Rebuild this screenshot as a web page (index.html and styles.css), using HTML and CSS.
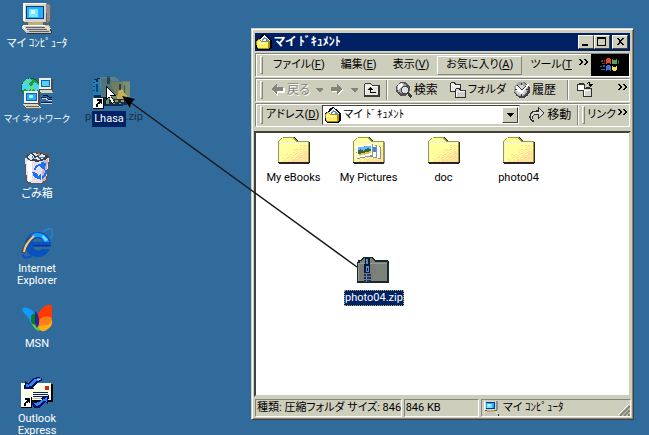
FILE: index.html
```html
<!DOCTYPE html>
<html lang="ja">
<head>
<meta charset="utf-8">
<title>マイ ﾄﾞｷｭﾒﾝﾄ</title>
<link rel="stylesheet" href="styles.css">
</head>
<body>
<svg class="defs" aria-hidden="true">
  <defs>
    <pattern id="dots" width="4" height="4" patternUnits="userSpaceOnUse">
      <path fill="#ffce9c" d="M0 0h1v1H0zM2 1h1v1H2zM1 2h1v1H1zM3 3h1v1H3zM3 1h1v1H3z"/>
    </pattern>
    <symbol id="folder" viewBox="0 0 32 28">
      <path fill="#000" d="M2 3h2V2h2V1h11v1h1v1h1v1h1v1h11v1h1v21h-1v1H1v-1H0V5h1V4h1z" opacity=".85"/>
      <path fill="#9c9c31" d="M0 5h1V4h1V3h1V2h2V1h11v1h1v1h1v1h1v1h12v21H0z"/>
      <path fill="#ffff9c" d="M1 5h1V4h1V3h1V2h11v1h1v1h1v1h1v1h12v20H1z"/>
      <path fill="#efefef" d="M1 6h29v1H2v18H1z"/>
      <path fill="url(#dots)" d="M22 9h8v17H4v-4h4v-4h7v-5h7z"/>
      <path fill="#ffce9c" opacity=".45" d="M25 15h5v11H13v-3h7v-4h5z"/>
    </symbol>
    <symbol id="pc" viewBox="0 0 32 32">
      <path fill="#63635a" d="M2 1h27l1 2v16l-2 3H4l-2-2z"/>
      <path fill="#d6d6c6" d="M2 1h23v19H3z"/>
      <path fill="#fff" d="M2 1h24v1H4v17H2z"/>
      <path fill="#8c8c94" d="M25 1l4 2v16l-3 2z"/>
      <path fill="#003984" d="M5 4h18v13H5z"/>
      <path fill="#29adff" d="M6 5h16v11H6z"/>
      <path fill="#7be7ff" d="M8 7h9v8H8z"/>
      <path fill="#cff" d="M10 8h4v4h-4z"/>
      <path fill="#bdad7b" d="M7 20h15v3H7z"/>
      <path fill="#c6c6bd" d="M2 23h26l3 6-1 2H5l-4-5z"/>
      <path fill="#fff" d="M2 23h22v1H3l3 5H5l-4-4z"/>
      <path fill="#63636b" d="M5 25h20v1H5zM6 27h20v1H6zM8 29h20v1H8z"/>
      <path fill="#efdead" d="M22 24h5l3 4h-4z"/>
      <path fill="#29314a" d="M5 31h25v1H6zM29 27l2 2v2h-1z"/>
    </symbol>
    <symbol id="docs" viewBox="0 0 16 16">
      <path fill="#000" d="M0 6l4-2 1-3 3-1 6 4 2 3v6l-3 3H2l-2-2z"/>
      <path fill="#fff" d="M4 5l5-4 5 6v5H4z"/>
      <path fill="#4a94de" d="M6 5l2-2 1 1-3 4zM9 4l1-1 3 4-1 2z"/>
      <path fill="#ad8c18" d="M0 7l3-2 3 2h8v6l-2 2H2l-1-1z"/>
      <path fill="#ffef63" d="M1 7l2-1 2 2h7v6H2L1 13z"/>
      <path fill="#ffffce" d="M2 8h2l1 1h6v1H2z"/>
    </symbol>
    <symbol id="shortcut" viewBox="0 0 11 11">
      <path fill="#000" d="M0 0h11v11H0z"/><path fill="#fff" d="M0 0h10v10H0z"/>
      <path fill="#000" d="M4 1h5v5H8V5H7L6 6H5v3H3V6h1V5l1-1 1-1H4z"/>
    </symbol>
    <symbol id="zipfolder" viewBox="0 0 33 28">
      <path fill="#182929" d="M0 6h1V4h2l3-3h9l3 3h13l1 2v20l-1 1H0z"/>
      <path fill="#7b8473" d="M1 7h2V5h2l2-3h7l4 4h12v19H1z"/>
      <path fill="#7b7b7b" d="M3 8h26v16H3z"/>
      <path fill="#7b8c73" opacity=".5" d="M19 8h10v16H16v-7h3z"/>
      <path fill="#949c94" d="M1 7h29v1H2v17H1z"/>
      <path fill="#081839" d="M8 2h5v15H7V8h1z"/>
      <path fill="#5a8cb5" d="M9 3h2v5H9zM9 10h3v6H9z"/>
      <path fill="#081839" d="M10 12h1v3h-1z"/>
      <path stroke="#183163" stroke-width="7" stroke-dasharray="2 1" d="M10 18v8"/>
      <path fill="#6b84a5" d="M9 18h1v8H9z"/>
    </symbol>
  </defs>
</svg>

<main class="desktop">
  <nav class="shortcuts" aria-label="デスクトップ">
    <button class="shortcut">
      <svg class="icon"><use href="#pc"/></svg>
      <span class="label">マイ ｺﾝﾋﾟｭｰﾀ</span>
    </button>
    <button class="shortcut">
      <svg class="icon" viewBox="0 0 32 32">
        <circle cx="10" cy="11" r="10" fill="#0c5a31"/>
        <circle cx="10" cy="11" r="9" fill="#219c31"/>
        <path fill="#4ad6ef" d="M1 8l3-5 5-2 2 3-4 3 3 2-2 5-4-2-3 1zM13 5l4 2 2 5-4 2-4-3z"/>
        <path fill="#63e763" d="M3 5l3-3 2 1-4 4zM9 9l3-1 1 4-3 2z"/>
        <path fill="#004a7b" d="M10 14l6 1-2 4-7-1z"/>
        <path fill="#4a4a52" d="M18 2h14v12H18z"/>
        <path fill="#efefe7" d="M18 1h12v11H18z"/>
        <path fill="#0863b5" d="M20 3h9v7h-9z"/><path fill="#5acef7" d="M21 4h7v5h-7z"/>
        <path fill="#d6d6bd" d="M19 13h12l1 3H20z"/>
        <path fill="#4a4a52" d="M3 14h16v14H3z"/>
        <path fill="#efefe7" d="M3 14h14v12H3z"/>
        <path fill="#0863b5" d="M5 16h11v8H5z"/><path fill="#29adff" d="M6 17h9v6H6z"/>
        <path fill="#a5f7ff" d="M8 18h4v3H8z"/>
        <path fill="#d6d6bd" d="M2 27h15l3 4H5z"/>
        <path fill="#63635a" d="M4 29h14v1H5zM5 31h15v1H5z"/>
        <path fill="none" stroke="#001842" stroke-width="1" d="M20 25h11M20 20h3l4 2h4M22 18h3l3 2h3"/>
        <path fill="none" stroke="#c6d6e7" stroke-width="1" d="M20 26h11M21 21h3l3 2h4"/>
      </svg>
      <span class="label long">マイ ネットワーク</span>
    </button>
    <button class="shortcut">
      <svg class="icon" viewBox="0 0 32 32">
        <path fill="#5a5a63" d="M4 4l6-4h10l9 2v5l-2 22-5 3H8l-4-3z"/>
        <path fill="#e7dee7" d="M4 6l2 23 5 2h9l5-3 3-22z"/>
        <path fill="#c6b5bd" d="M22 9l5-2-2 21-4 2z"/>
        <path fill="#fff" d="M6 9h5v20H7z"/>
        <path fill="#39424a" d="M5 4l6-3h9l8 3-4 4-8 2-9-2z"/>
        <path fill="#d6e7f7" d="M6 5l4-3 3 3-3 3zM12 1l5 1-2 3zM17 4l4-2 4 2-4 3zM12 7l4-2 3 3z"/>
        <path fill="#4a8cb5" d="M9 5l3-1v2zM18 5h5v1h-5z"/>
        <path fill="#b58442" d="M17 1h2v3h-2z"/>
        <path fill="none" stroke="#1873f7" stroke-width="2" d="M14 18q1-5 5-5l3 1M13 21q0 4 4 5M25 18q0 6-4 8"/>
        <path fill="#1873f7" d="M20 10l5 1-1 7-5-3zM11 20l5 1 3 6-5-1zM20 21v7l-4-3z"/>
      </svg>
      <span class="label">ごみ箱</span>
    </button>
    <button class="shortcut">
      <svg class="icon smooth" viewBox="0 0 32 32">
        <path fill="none" stroke="#2184de" stroke-width="1.5" d="M22 5q6-5 9-2 2 3-2 9"/>
        <path fill="#0852bd" fill-rule="evenodd" d="M17 5c8 0 13 6 13 14H12c0 4 6 6 9 3h8c-3 6-7 8-12 8C9 30 4 25 4 18S9 5 17 5zm-5 10h10c-1-5-9-5-10 0z"/>
        <path fill="#189cff" d="M16 6c7 0 11 4 12 9h-5c-1-5-7-7-11-3l-3-2q3-4 7-4z"/>
        <path fill="#73deff" d="M22 8l5 5-3 1-3-4z"/>
        <path fill="#08319c" d="M12 18h18v1.500H12z"/>
        <path fill="none" stroke="#4a4a5a" stroke-width="4" d="M12 10Q4 17 2 26"/>
        <path fill="none" stroke="#efce84" stroke-width="2" d="M13 9Q4 17 3 25"/>
        <path fill="none" stroke="#1052bd" stroke-width="2" d="M2 27q0 5 6 3l3-1"/>
      </svg>
      <span class="label">Internet<br>Explorer</span>
    </button>
    <button class="shortcut">
      <svg class="icon smooth" viewBox="0 0 32 32">
        <path fill="#109cff" d="M1 7q2-3 8 0 7 4 8 16-5 3-8-4-2-5-5-7-2-1-3-5z"/>
        <path fill="#ff3900" d="M16 15Q19 6 26 3q4-1 5 1v12q-4-2-8 0l-5 4z"/>
        <path fill="#63c64a" d="M10 18l5-2 4 13q-5 0-8-7z"/>
        <path fill="#008418" d="M10 14q3-5 5 0l1 8q-5 2-6-3z"/>
        <path fill="#ffad10" d="M17 25l5-5 9-2q1 6-4 9-5 4-8 1z"/>
        <path fill="#ff7b18" d="M17 24q-1-6 5-9 5-2 9 1-1 7-6 7z"/>
        <path fill="#31219c" d="M14 9q5 4 4 13l-2 4q-3-5-2-10z"/>
      </svg>
      <span class="label">MSN</span>
    </button>
    <button class="shortcut">
      <svg class="icon" viewBox="0 0 32 32">
        <path fill="#000" d="M1 7h31v18H1z"/>
        <path fill="#ffffe7" d="M0 6h30v17H0z"/>
        <path fill="#c6c6a5" d="M1 21h28v1H1z"/>
        <path fill="#ce2918" d="M24 9h4v4h-4z"/>
        <path fill="#08216b" d="M12 15h15v1H12zM12 17h15v1H12zM12 19h12v1H12z"/>
        <path fill="#001063" d="M3 12l1-8 3 2 4-4 5-2 5 1v3l-4 1-3 3-2 2 1 2z"/>
        <path fill="#3184ef" d="M5 10V7l3 1 4-5 5-2h3v2l-5 1-4 5z"/>
        <path fill="#8cdeff" d="M16 2h3v1h-3z"/>
        <path fill="#001063" d="M10 25h6l5-2-2-2 9-3-1 9-3-2-6 6h-5z"/>
        <path fill="#3184ef" d="M13 26l5-1 5-3 3-2v5l-3-1-5 4-3 1z"/>
        <use href="#shortcut" x="0" y="20" width="11" height="11"/>
      </svg>
      <span class="label">Outlook<br>Express</span>
    </button>
    <button class="shortcut target">
      <svg class="icon" viewBox="0 0 32 32">
        <path fill="#082952" d="M1 2h3V1h12l3 3h11v25H1z"/>
        <path fill="#297bb5" d="M0 3h3v2h2V2h3v16H0z"/>
        <path fill="#004a7b" d="M0 5h2v1H0zM0 9h2v1H0zM0 13h2v1H0zM3 7h2v8H3z"/>
        <path fill="#7b8c52" d="M13 18h12v9H13z"/>
        <use href="#shortcut" x="0" y="21" width="11" height="11"/>
      </svg>
      <svg class="ghost" viewBox="0 0 33 34">
        <g opacity=".75">
          <path fill="#6b8c84" d="M1 1h16l3 4h11v16H2z"/>
          <path fill="#949c63" d="M11 6h20v15H18z"/>
          <path fill="#314a5a" d="M8 0h3v8H8zM20 8h2v9h-2zM25 9h1v8h-1z"/>
        </g>
        <path fill="#c6ad5a" d="M19 15l4-2 5 7 1 3H18z"/>
        <path fill="#103152" d="M10 23h18v6H10z"/>
        <path fill="#a59c52" d="M12 24h1v1h-1zM16 24h3v2h-3zM22 24h3v2h-3zM14 27h2v1h-2zM20 27h2v1h-2z"/>
        <path fill="#000" d="M7 9l10 11h-5l4 6-3 2-3-7-3 3z"/>
        <path fill="#fff" d="M8 11l7 8h-4l4 7-2 1-3-7-2 2z"/>
      </svg>
      <span class="ghost-label">photo04.zip</span>
      <span class="label selected">Lhasa</span>
    </button>
  </nav>

  <section class="window" aria-label="マイ ﾄﾞｷｭﾒﾝﾄ">
    <header class="titlebar">
      <svg class="small"><use href="#docs"/></svg>
      <h1 class="title">マイ ﾄﾞｷｭﾒﾝﾄ</h1>
      <div class="controls">
        <button class="control" aria-label="最小化"><svg viewBox="0 0 12 10"><path d="M2 7h6v2H2z"/></svg></button>
        <button class="control" aria-label="最大化"><svg viewBox="0 0 12 10"><path fill-rule="evenodd" d="M1 0h9v9H1zM2 2v6h7V2z"/></svg></button>
        <button class="control close" aria-label="閉じる"><svg viewBox="0 0 12 10"><path d="M2 1h2l2 2 2-2h2L7 4v1l3 3H8L6 6 4 8H2l3-3V4z"/></svg></button>
      </div>
    </header>

    <div class="bars">
      <div class="bar menubar">
        <span class="grip"></span>
        <div class="menus">
          <button class="menu">ファイル(<u>F</u>)</button>
          <button class="menu">編集(<u>E</u>)</button>
          <button class="menu">表示(<u>V</u>)</button>
          <button class="menu raised">お気に入り(<u>A</u>)</button>
          <button class="menu">ツール(<u>T</u></button>
        </div>
        <button class="more" aria-label="その他のメニュー"><svg viewBox="0 0 9 6"><path d="M0 0h2l2 3-2 3H0l2-3zM5 0h2l2 3-2 3H5l2-3z"/></svg></button>
        <div class="brand">
          <svg viewBox="0 0 20 16">
            <path fill="#e74a21" d="M6 2q3-2 5 0v5q-3-2-5 0z"/><path fill="#52a552" d="M12 2q3 2 5 0v5q-3 1-5 0z"/>
            <path fill="#3973d6" d="M6 9q3-2 5 0v5q-3-2-5 0z"/><path fill="#efde4a" d="M12 9q3 2 5 0v4q-3 2-5 0z"/>
            <path fill="#843129" d="M1 3h2v2H1zM4 3h1v2H4zM2 6h3v1H2z"/><path fill="#2963a5" d="M0 9h2v1H0zM3 8h2v2H3zM1 12h4v1H1z"/>
            <path fill="#426b42" d="M18 3h1v4h-1z"/>
          </svg>
        </div>
      </div>

      <div class="bar toolbar">
        <span class="grip"></span>
        <button class="tool disabled back"><svg viewBox="0 0 14 14"><path fill="#fff" d="M7 2v3h7v5H7v3L1 8z"/><path fill="#84847b" d="M6 1v3h6v4H6v3L0 6z"/></svg>戻る</button>
        <button class="drop" aria-label="戻る履歴"><svg viewBox="0 0 7 4"><path d="M0 0h7v1L4 4H3L0 1z"/></svg></button>
        <button class="tool disabled" aria-label="進む"><svg viewBox="0 0 14 14"><path fill="#fff" d="M7 2v3H1v4h6v3l6-5z"/><path fill="#84847b" d="M6 1v3H0v4h6v3l6-5z"/></svg></button>
        <button class="drop" aria-label="進む履歴"><svg viewBox="0 0 7 4"><path d="M0 0h7v1L4 4H3L0 1z"/></svg></button>
        <button class="tool up" aria-label="上へ"><svg viewBox="0 0 16 16"><path fill="#39393a" d="M0 2h1V1h6v1h1v1h7l1 1v11H0z"/><path fill="#e7e7de" d="M1 4V2h5l2 2h6v9H1z"/><path fill="#fff" d="M1 4h13v1H2v8H1z"/><path fill="#000" d="M6 5h1v1h1v1h1v1H7v2h5v1H6V8H4V7h1V6h1z"/></svg></button>
        <span class="divider"></span>
        <button class="tool"><svg viewBox="0 0 16 16"><circle cx="7" cy="7" r="7" fill="#52525a"/><circle cx="6" cy="6" r="5" fill="#a5a5a5"/><path fill="#f7f7f7" d="M2 3l4-2 1 2-3 3-2 2z"/><circle cx="9" cy="8" r="4" fill="#424242"/><circle cx="9" cy="8" r="3" fill="#dededf"/><path fill="#39393a" d="M11 11l2-1 3 4-2 2z"/></svg>検索</button>
        <button class="tool folders"><svg viewBox="0 0 16 16"><path fill="#313131" d="M0 1h1V0h4l1 2h5v8H0z"/><path fill="#e7e7e7" d="M1 2V1h3l1 2h5v6H1z"/><path fill="#313131" d="M5 7h1V6h4l1 2h5v8H5z"/><path fill="#cecece" d="M6 8V7h3l1 2h5v6H6z"/><path fill="#fff" d="M6 9h9v1H7v5H6zM1 3h8v1H2v5H1z"/></svg>フォルダ</button>
        <button class="tool"><svg viewBox="0 0 16 16"><circle cx="8" cy="8" r="8" fill="#42424a"/><circle cx="7" cy="7" r="7" fill="#a5a5a5"/><circle cx="7" cy="8" r="5" fill="#d6d6d6"/><path fill="#fff" d="M3 3l5 4 6-6 1 2-6 6-1 4-3-3-4-2z"/><path fill="#313131" d="M7 1h1v2H7zM1 7h2v1H1zM7 12h1v2H7zM12 7h2v1h-2zM3 3l5 4 4-3-4 5z"/></svg>履歴</button>
        <span class="divider wide"></span>
        <button class="tool" aria-label="移動先"><svg viewBox="0 0 16 16"><path fill="#313131" d="M0 2h2V1h5v1h1v7H0zM6 6h3V5h4v1h2v9H6z"/><path fill="#fff" d="M1 3h6v5H1z"/><path fill="#d6d6d6" d="M7 7h7v7H7z"/><path fill="#fff" d="M7 8h6v1H8v5H7z"/><path fill="#000" d="M9 2l2-2h2v2h3l-3 3-2-2h1V1h-1l-1 2z"/></svg></button>
        <button class="more end" aria-label="その他のボタン"><svg viewBox="0 0 9 6"><path d="M0 0h2l2 3-2 3H0l2-3zM5 0h2l2 3-2 3H5l2-3z"/></svg></button>
      </div>

      <div class="bar addressbar">
        <span class="grip"></span>
        <label class="address-label" for="address">アドレス(<u>D</u>)</label>
        <div class="combo">
          <svg class="small"><use href="#docs"/></svg>
          <select id="address"><option>マイ ﾄﾞｷｭﾒﾝﾄ</option></select>
          <span class="combo-arrow"><svg viewBox="0 0 7 4"><path d="M0 0h7L4 4H3z"/></svg></span>
        </div>
        <button class="tool go"><svg viewBox="0 0 16 16"><path fill="#313131" d="M1 13q-2-6 3-9l5-1V0l6 6-6 6V8q-4-1-5 2l1 5H3z"/><path fill="#dedede" d="M2 12q-1-5 3-7h5V2l4 4-4 4V7Q4 6 3 10l1 4z"/></svg>移動</button>
        <span class="divider"></span>
        <span class="grip"></span>
        <span class="links">リンク</span>
        <button class="more end" aria-label="その他のリンク"><svg viewBox="0 0 9 6"><path d="M0 0h2l2 3-2 3H0l2-3zM5 0h2l2 3-2 3H5l2-3z"/></svg></button>
      </div>
    </div>

    <div class="files">
      <button class="file"><svg><use href="#folder"/></svg><span>My eBooks</span></button>
      <button class="file"><svg viewBox="0 0 32 28"><use href="#folder"/>
        <path fill="#84949c" d="M21 9l8 2-1 12-6-1z"/><path fill="#fff" d="M22 9l6 2-1 11-5-1z"/>
        <path fill="#84949c" d="M16 8l9 1-1 13-7-1z"/><path fill="#fff" d="M16 8l8 2-1 11-6-1z"/><path fill="#4a84ce" d="M20 11h3v5h-3z"/>
        <path fill="#84949c" d="M3 10l17-2 1 12-16 3z"/><path fill="#fff" d="M3 10l16-2 1 11-15 3z"/>
        <path fill="#63b5ff" d="M5 11l13-1v5l-12 2z"/><path fill="#316b31" d="M5 15l3-2 3 2 4-3 3 1v3L6 18z"/><path fill="#efbd52" d="M6 18l12-3v2L6 20z"/>
      </svg><span>My Pictures</span></button>
      <button class="file"><svg><use href="#folder"/></svg><span>doc</span></button>
      <button class="file"><svg><use href="#folder"/></svg><span>photo04</span></button>
      <button class="file dragged"><svg><use href="#zipfolder"/></svg><span>photo04.zip</span></button>
    </div>

    <footer class="status">
      <span class="pane summary">種類: 圧縮フォルダ サイズ: 846</span>
      <span class="pane size">846 KB</span>
      <span class="pane place"><svg class="small"><use href="#pc"/></svg><span>マイ ｺﾝﾋﾟｭｰﾀ</span>
        <svg class="resize" viewBox="0 0 12 12"><path stroke="#fff" d="M0 11L11 0M4 11l7-7M8 11l3-3"/><path stroke="#84847b" stroke-width="2" d="M2 12L12 2M6 12l6-6M10 12l2-2"/></svg>
      </span>
    </footer>
  </section>

  <svg class="drag-line" viewBox="0 0 236 172" aria-hidden="true">
    <path stroke="#18181c" stroke-width="1.500" d="M235 171L8 6"/>
    <path fill="#000" d="M0 0l13 3-4 4-1 5z"/>
  </svg>
</main>
</body>
</html>
```

FILE: styles.css
```css
:root {
  --face: #cecebd;
  --shade: #84847b;
  --dark: #42423a;
  --navy: #002163;
  --desktop: #316b9c;
}

* {
  box-sizing: border-box;
}

body {
  margin: 0;
  height: 100vh;
  overflow: hidden;
  background: var(--desktop);
  font: 11px/12px Roboto, "Noto Sans CJK JP", sans-serif;
  font-feature-settings: "palt";
  color: #000;
}

button,
select {
  margin: 0;
  padding: 0;
  border: 0;
  background: none;
  font: inherit;
  font-feature-settings: inherit;
  color: inherit;
}

svg {
  display: block;
  flex: none;
  fill: currentColor;
  shape-rendering: crispEdges;
}

u {
  text-underline-offset: 1px;
}

.defs {
  position: absolute;
  width: 0;
  height: 0;
}

.small {
  width: 16px;
  height: 16px;
}

.desktop {
  position: relative;
  height: 100%;
  overflow: hidden;
}

/* Desktop shortcuts */

.shortcuts {
  display: grid;
  grid-template-columns: 74px 70px;
  grid-auto-rows: 75px;
}

.shortcut {
  grid-column: 1;
  position: relative;
  display: flex;
  flex-direction: column;
  align-items: center;
  gap: 2px;
  padding-top: 2px;
  color: #fff;
}

.icon {
  width: 32px;
  height: 32px;
}

.smooth {
  shape-rendering: auto;
}

.label {
  padding: 2px;
  white-space: nowrap;
}

.long {
  font-size: 9px;
}

.target {
  grid-column: 2;
  grid-row: 2;
}

.selected {
  position: relative;
  background: var(--navy);
}

.ghost {
  position: absolute;
  left: 25px;
  top: 1px;
  width: 33px;
  height: 34px;
}

.ghost-label {
  position: absolute;
  left: 11px;
  top: 36px;
  color: #18314a;
}

/* Explorer window */

.window {
  position: absolute;
  inset: 28px 15px 15px 251px;
  display: flex;
  flex-direction: column;
  padding: 3px 2px 2px;
  background: var(--face);
  border: 1px solid;
  border-color: var(--face) var(--dark) var(--dark) var(--face);
  box-shadow: inset 1px 1px #fff, inset -1px -1px var(--shade);
}

.titlebar {
  display: flex;
  align-items: center;
  gap: 2px;
  height: 18px;
  margin: 1px 1px 0;
  padding: 0 2px 0 1px;
  background: var(--navy);
  color: #fff;
}

.title {
  flex: 1;
  margin: 0;
  font-size: 12px;
  font-weight: 700;
}

.controls {
  display: flex;
  color: #000;
}

.control {
  width: 16px;
  height: 14px;
  padding: 1px;
  background: var(--face);
  border: 1px solid;
  border-color: #fff var(--dark) var(--dark) #fff;
}

.control svg {
  width: 12px;
  height: 10px;
}

.close {
  margin-left: 2px;
}

.bars {
  display: flex;
  flex-direction: column;
  gap: 1px;
  margin: 2px 1px 0;
}

.bar {
  display: flex;
  align-items: center;
  height: 24px;
  padding: 0 1px 0 4px;
  border: 1px solid;
  border-color: var(--shade) #fff #fff var(--shade);
  box-shadow: inset 1px 1px #fff;
  white-space: nowrap;
}

.grip {
  flex: none;
  width: 3px;
  height: 18px;
  border: 1px solid;
  border-color: #fff var(--shade) var(--shade) #fff;
}

.menubar {
  padding-right: 0;
}

.menus {
  display: flex;
  flex: 1;
  min-width: 0;
  margin-left: 2px;
}

.menu {
  height: 19px;
  padding: 0 8px;
}

.raised {
  border: 1px solid;
  border-color: #fff var(--shade) var(--shade) #fff;
}

.more {
  align-self: flex-start;
  flex: none;
  width: 9px;
  margin: 5px 3px 0;
}

.more svg {
  width: 9px;
  height: 6px;
}

.end {
  margin: 5px 1px 0 auto;
}

.brand {
  display: grid;
  place-items: center;
  flex: none;
  width: 38px;
  height: 22px;
  background: #000;
}

.brand svg {
  width: 20px;
  height: 16px;
}

.tool {
  display: flex;
  align-items: center;
  flex: none;
  gap: 2px;
  margin-left: 8px;
}

.tool svg {
  width: 16px;
  height: 16px;
}

.tool.disabled svg {
  width: 14px;
  height: 14px;
}

.toolbar,
.go {
  font-size: 12px;
}

.disabled {
  color: var(--shade);
  text-shadow: 1px 1px #fff;
}

.back {
  margin-left: 8px;
}

.drop {
  margin-left: 6px;
  color: var(--shade);
}

.drop svg {
  width: 7px;
  height: 4px;
}

.up {
  margin-left: 6px;
}

.folders {
  margin-left: 12px;
  font-size: 11px;
}

.divider {
  align-self: stretch;
  width: 2px;
  margin: 1px 0 1px 6px;
  border-left: 1px solid var(--shade);
  background: #fff;
}

.divider.wide {
  margin-left: 11px;
}

.address-label {
  margin: 0 3px;
}

.combo {
  position: relative;
  display: flex;
  align-items: center;
  flex: 1;
  min-width: 0;
  height: 20px;
  padding: 0 2px;
  background: #fff;
  border: 1px solid;
  border-color: var(--dark) var(--face) var(--face) var(--dark);
}

.combo select {
  flex: 1;
  min-width: 0;
  height: 18px;
  padding-left: 2px;
  appearance: none;
  outline: 0;
}

.combo-arrow {
  position: absolute;
  inset: 1px 1px 1px auto;
  display: grid;
  place-items: center;
  width: 16px;
  background: var(--face);
  border: 1px solid;
  border-color: #fff var(--dark) var(--dark) #fff;
  pointer-events: none;
}

.combo-arrow svg {
  width: 7px;
  height: 4px;
}

.go {
  margin-left: 9px;
}

.addressbar .divider {
  margin-right: 3px;
}

.links {
  margin: 0 2px;
}

.files {
  position: relative;
  flex: 1;
  display: grid;
  grid-template-columns: repeat(auto-fill, 75px);
  align-content: start;
  margin-top: 4px;
  background: #fff;
  border: 2px solid;
  border-color: var(--dark) var(--face) var(--face) var(--dark);
}

.file {
  display: flex;
  flex-direction: column;
  align-items: center;
  gap: 6px;
  padding-top: 3px;
}

.file svg {
  width: 33px;
  height: 28px;
}

.file span {
  padding: 2px 1px;
}

.dragged {
  position: absolute;
  left: 88px;
  top: 120px;
}

.dragged span {
  background: var(--navy);
  color: #fff;
  outline: 1px dotted #b5ad73;
  outline-offset: -1px;
}

.status {
  display: flex;
  gap: 2px;
  height: 18px;
  margin-top: 2px;
  padding-left: 1px;
}

.pane {
  display: flex;
  align-items: center;
  height: 18px;
  padding-left: 1px;
  overflow: hidden;
  white-space: nowrap;
  border: 1px solid;
  border-color: var(--shade) #fff #fff var(--shade);
}

.summary {
  flex: 0 0 39%;
}

.size {
  flex: 0 0 20%;
}

.place {
  flex: 1;
  gap: 4px;
}

.resize {
  align-self: flex-end;
  width: 12px;
  height: 12px;
  margin-left: auto;
  shape-rendering: auto;
}

.drag-line {
  position: absolute;
  left: 122px;
  top: 96px;
  width: 236px;
  height: 172px;
  shape-rendering: auto;
  pointer-events: none;
}
```
